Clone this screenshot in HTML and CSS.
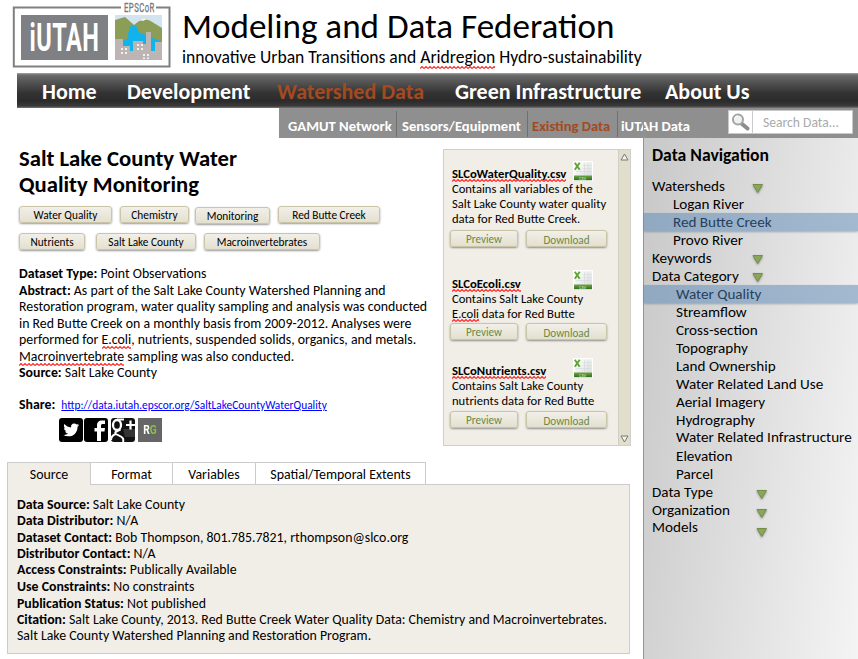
FILE: index.html
```html
<!DOCTYPE html>
<html lang="en">
<head>
<meta charset="utf-8">
<title>Modeling and Data Federation</title>
<link rel="stylesheet" href="styles.css">
</head>
<body>
<svg width="0" height="0" class="defs" aria-hidden="true">
  <defs>
    <linearGradient id="paper" x1="0" y1="0" x2="1" y2="1"><stop offset="0" stop-color="#fff"/><stop offset="1" stop-color="#d9dcdc"/></linearGradient>
    <linearGradient id="band" x1="0" y1="0" x2="0" y2="1"><stop offset="0" stop-color="#6fa548"/><stop offset="1" stop-color="#2f6e1c"/></linearGradient>
    <symbol id="csv" viewBox="0 0 20 20">
      <rect width="20" height="20" fill="#fff"/>
      <rect x="1.5" y="1" width="17.5" height="18" rx="1" fill="url(#paper)"/>
      <path d="M10 4.500h8M10 7.500h8M3 10.500h15M11.500 2v12M15 2v12" stroke="#d3d8d8" stroke-width=".6"/>
      <rect x="1" y="14.500" width="18" height="4.700" fill="url(#band)"/>
      <path d="M1.800 1.700 6.700 8.700M6.700 1.700 1.800 8.700" stroke="#62a335" stroke-width="1.900"/>
      <text x="6" y="18.500" font-size="4.500" font-weight="700" fill="#b9d8a4">CSV</text>
    </symbol>
    <symbol id="tri" viewBox="0 0 12 11"><path d="M1 1.500h9.500L5.750 9.500z" fill="#8aa65a" stroke="#6d8a3c" stroke-width=".9"/></symbol>
  </defs>
</svg>
<div class="page">
  <header class="head">
    <svg class="logo" width="162" height="70" viewBox="0 0 162 70">
      <path d="M109 7.500H1.800V66.500H157.500V7.500H144" fill="none" stroke="#7f8083" stroke-width="2"/>
      <rect x="9" y="15" width="87" height="45" fill="#7f8083"/>
      <text class="logo-name" transform="translate(17.500 51) scale(.62 1)" font-size="38" textLength="112">iUTAH</text>
      <text class="logo-sub" transform="translate(112 11.500) scale(.62 1)" font-size="12.500" textLength="49">EPSCoR</text>
      <rect x="103" y="15" width="47" height="45" fill="#d3e4f0"/>
      <path d="M103 20 113 17 122 25 132 17 150 28V60H103z" fill="#8c9d58"/>
      <path d="M126 21.500 132 17 138 20.500 134 19.500 131 21 129 20.500z" fill="#eef2ea"/>
      <path d="M117 27 121 25.500 126 27C124 30 127 31 127 32 133 35 144 39 150 42V60H110V41C115 40 117 38 116 34 116 31 119 29 117 27z" fill="#12b3ec"/>
      <path d="M103 39h8v7h10V41h10v3h3V32h5v19h4V42h7v18h-47z" fill="#bdb5b3"/>
      <path d="M121 46v5h-3v-5zM143 42v9h-4v-9z" fill="#12b3ec"/>
      <path d="M109 48h2v2h-2zM113 48h2v2h-2zM109 52h2v2h-2zM113 52h2v2h-2zM125 44h2v2h-2zM129 44h2v2h-2zM125 48h2v2h-2zM129 48h2v2h-2zM131 54h2v2h-2zM135 54h2v2h-2zM131 57.500h2v1.500h-2zM135 57.500h2v1.500h-2z" fill="#f3f1f0"/>
    </svg>
    <div class="titles">
      <div class="title">Modeling and Data Federation</div>
      <div class="subtitle">innovative Urban Transitions and <span class="sq">Aridregion</span> Hydro-sustainability</div>
    </div>
  </header>

  <nav class="bar">
    <a class="n1">Home</a><a class="n2">Development</a><a class="n3 on">Watershed Data</a><a class="n4">Green Infrastructure</a><a class="n5">About Us</a>
  </nav>
  <div class="subbar">
    <a class="s1">GAMUT Network</a><a class="s2">Sensors/Equipment</a><a class="s3 on">Existing Data</a><a class="s4">iUTAH Data</a>
    <div class="search">
      <svg width="23" height="22" viewBox="0 0 23 22"><path d="M12.500 12.500 18.500 17.500" stroke="#8d8d8d" stroke-width="4" stroke-linecap="round"/><circle cx="9" cy="8.500" r="5" fill="#eef1f3" stroke="#a3a3a3" stroke-width="2"/><path d="M6 8a3 3 0 0 1 3-3" fill="none" stroke="#fff" stroke-width="1.200"/></svg>
      <span>Search Data...</span>
    </div>
  </div>

  <div class="cols">
    <main class="main">
      <div class="top">
        <section class="info">
          <h1>Salt Lake County Water<br>Quality Monitoring</h1>
          <div class="tags">
            <span class="tag t1">Water Quality</span><span class="tag t2">Chemistry</span><span class="tag t3">Monitoring</span><span class="tag t4">Red Butte Creek</span>
          </div>
          <div class="tags row2">
            <span class="tag t5">Nutrients</span><span class="tag t6">Salt Lake County</span><span class="tag t7">Macroinvertebrates</span>
          </div>
          <div class="desc">
            <b>Dataset Type:</b> Point Observations<br>
            <b>Abstract:</b> As part of the Salt Lake County Watershed Planning and<br>
            Restoration program, water quality sampling and analysis was conducted<br>
            in Red Butte Creek on a monthly basis from 2009-2012. Analyses were<br>
            performed for <span class="sq">E.coli</span>, nutrients, suspended solids, organics, and metals.<br>
            <span class="sq">Macroinvertebrate</span> sampling was also conducted.<br>
            <b>Source:</b> Salt Lake County
          </div>
          <div class="share"><b>Share:</b><a>http://data.iutah.epscor.org/SaltLakeCountyWaterQuality</a></div>
          <div class="social">
            <svg width="24" height="24" viewBox="0 0 24 24"><rect width="24" height="24" rx="3" fill="#000"/><path transform="translate(4.300 4) scale(.66)" fill="#fff" d="M23.950 4.570a10 10 0 0 1-2.820.77 4.960 4.960 0 0 0 2.160-2.720c-.95.55-2 .95-3.130 1.180a4.920 4.920 0 0 0-8.380 4.480C7.690 8.100 4.070 6.130 1.640 3.160a4.820 4.820 0 0 0-.67 2.480c0 1.710.87 3.210 2.190 4.100a4.900 4.900 0 0 1-2.230-.62v.06a4.920 4.920 0 0 0 3.950 4.830 5 5 0 0 1-2.210.08 4.940 4.940 0 0 0 4.600 3.420A9.870 9.870 0 0 1 0 19.540a13.990 13.990 0 0 0 7.550 2.210c9.050 0 14-7.500 14-13.980 0-.21 0-.42-.02-.63a9.940 9.940 0 0 0 2.460-2.550z"/></svg>
            <svg width="24" height="24" viewBox="0 0 24 24"><rect width="24" height="24" rx="3" fill="#000"/><path fill="#fff" d="M13 23v-9.500h-2.500V10H13V7.500C13 4 14.800 2.500 18 2.500h3V6h-2c-1.500 0-2 .6-2 2v2h4l-.5 3.500H17V23z"/></svg>
            <svg class="gp" width="24" height="24" viewBox="0 0 24 24"><rect width="24" height="24" rx="3" fill="#111"/><path d="M12 11h12v8H14z" fill="#333"/><g fill="none" stroke="#fff"><ellipse cx="6" cy="7" rx="4" ry="5" stroke-width="2.300"/><path d="M6 1.500h7M9.500 11.500c-3 2-6 2-5 4 1.500 2 6 2 7.500 5 .5 1.500.5 2 0 3.500M5 16c-3 1-5 3-5 6" stroke-width="2"/><path d="M15 7h9M19.500 2.500v9" stroke-width="2.200"/></g></svg>
            <div class="rg"><span>R<i>G</i></span></div>
          </div>
        </section>

        <section class="files">
          <div class="list">
            <article class="file f1">
              <svg class="ico"><use href="#csv"/></svg>
              <h2><span class="sq">SLCoWaterQuality.csv</span></h2>
              <p>Contains all variables of the<br>Salt Lake County water quality<br>data for Red Butte Creek.</p>
              <div class="btns"><span class="btn pv">Preview</span><span class="btn dl">Download</span></div>
            </article>
            <article class="file f2">
              <svg class="ico"><use href="#csv"/></svg>
              <h2><span class="sq">SLCoEcoli.csv</span></h2>
              <p>Contains Salt Lake County<br><span class="sq">E.coli</span> data for Red Butte</p>
              <div class="btns"><span class="btn pv">Preview</span><span class="btn dl">Download</span></div>
            </article>
            <article class="file f3">
              <svg class="ico"><use href="#csv"/></svg>
              <h2><span class="sq">SLCoNutrients.csv</span></h2>
              <p>Contains Salt Lake County<br>nutrients data for Red Butte</p>
              <div class="btns"><span class="btn pv">Preview</span><span class="btn dl">Download</span></div>
            </article>
          </div>
          <div class="scroll">
            <svg width="9" height="8" viewBox="0 0 9 8"><path d="M4.500 1 8 7H1z" fill="#f4f2ec" stroke="#777" stroke-width="1"/></svg>
            <svg width="9" height="8" viewBox="0 0 9 8"><path d="M4.500 7 8 1H1z" fill="#f4f2ec" stroke="#777" stroke-width="1"/></svg>
          </div>
        </section>
      </div>

      <div class="tabs"><span class="tab a on">Source</span><span class="tab b">Format</span><span class="tab c">Variables</span><span class="tab d">Spatial/Temporal Extents</span></div>
      <section class="panel">
        <div><b>Data Source:</b> Salt Lake County</div>
        <div><b>Data Distributor:</b> N/A</div>
        <div><b>Dataset Contact:</b> Bob Thompson, 801.785.7821, rthompson@slco.org</div>
        <div><b>Distributor Contact:</b> N/A</div>
        <div><b>Access Constraints:</b> Publically Available</div>
        <div class="gap"><b>Use Constraints:</b> No constraints</div>
        <div><b>Publication Status:</b> Not published</div>
        <div><b>Citation:</b> Salt Lake County, 2013. Red Butte Creek Water Quality Data: Chemistry and Macroinvertebrates.<br>Salt Lake County Watershed Planning and Restoration Program.</div>
      </section>
    </main>

    <aside class="side">
      <h3>Data Navigation</h3>
      <ul>
        <li class="g">Watersheds<svg class="tri"><use href="#tri"/></svg></li>
        <li class="r">Logan River</li>
        <li class="r sel">Red Butte Creek</li>
        <li class="r">Provo River</li>
        <li class="g k">Keywords<svg class="tri"><use href="#tri"/></svg></li>
        <li class="g k">Data Category<svg class="tri"><use href="#tri"/></svg></li>
        <li class="c sel">Water Quality</li>
        <li class="c">Streamflow</li>
        <li class="c">Cross-section</li>
        <li class="c">Topography</li>
        <li class="c">Land Ownership</li>
        <li class="c">Water Related Land Use</li>
        <li class="c">Aerial Imagery</li>
        <li class="c">Hydrography</li>
        <li class="c tight">Water Related Infrastructure</li>
        <li class="c">Elevation</li>
        <li class="c">Parcel</li>
        <li class="g low">Data Type<svg class="tri"><use href="#tri"/></svg></li>
        <li class="g low l2">Organization<svg class="tri"><use href="#tri"/></svg></li>
        <li class="g low l3 tight">Models<svg class="tri"><use href="#tri"/></svg></li>
      </ul>
    </aside>
  </div>
</div>
</body>
</html>
```
FILE: styles.css
```css
* { box-sizing: border-box; }
body { margin: 0; background: #fff; color: #000; font-family: Carlito, Calibri, Lato, sans-serif; }
h1, h2, h3, p, ul { margin: 0; padding: 0; }
svg { display: block; flex: none; }
.defs { position: absolute; }
.page { width: 858px; height: 659px; overflow: hidden; }

/* spelling squiggle */
.sq {
  padding-bottom: 1px;
  background: url("data:image/svg+xml,%3Csvg xmlns='http://www.w3.org/2000/svg' width='4' height='3'%3E%3Cpath d='M0 2.500 2 .5 4 2.500' fill='none' stroke='%23f22' stroke-width='1.100'/%3E%3C/svg%3E") repeat-x left bottom;
}

/* header */
.head { display: flex; height: 73px; }
.logo { margin-left: 12px; }
.logo-name { font-family: Roboto, "Liberation Sans", sans-serif; font-weight: 700; fill: #fff; }
.logo-sub { font-family: Roboto, "Liberation Sans", sans-serif; fill: #77787b; stroke: #77787b; stroke-width: .3; }
.titles { margin-left: 8px; padding-top: 6px; white-space: nowrap; }
.title { font-size: 35.100px; line-height: 40px; }
.subtitle { font-size: 17.600px; line-height: 22px; }

.bar {
  display: flex; height: 35px; margin-left: 17px;
  background: linear-gradient(#a5a5a5 0, #6c6c6c 2px, #575757 8px, #333 20px, #2b2b2b 28px, #3a3a3a 33px, #777 35px);
  color: #fff; font-size: 22px; font-weight: 700; line-height: 37px; white-space: nowrap;
}
.on { color: #a34a20; }
.n1 { width: 85px; margin-left: 25px; }
.n2 { width: 150px; }
.n3 { width: 178px; }
.n4 { width: 210px; }

.subbar {
  display: flex; height: 30px; margin-left: 279px; background: #8f8f8f;
  color: #fff; font-size: 14.620px; font-weight: 700; white-space: nowrap;
}
.subbar a { border-left: 1px solid #6f6f6f; margin-top: 3px; height: 26px; line-height: 30px; }
.subbar .s1 { width: 117px; padding-left: 9px; border: 0; }
.s2 { width: 131px; padding-left: 5px; }
.s3 { width: 90px; padding-left: 4px; }
.s4 { width: 111px; padding-left: 3px; }
.search {
  display: flex; width: 125px; height: 24px; margin-top: 2px; background: #fff; border: 1px solid #c9c9c9;
  color: #aaa; font-size: 13.600px; font-weight: 400; line-height: 24px;
}
.search span { border-left: 1px solid #ccc; padding-left: 10px; }

/* columns */
.cols { display: flex; height: 521px; }
.main { width: 643px; }
.top { display: flex; height: 324px; }
.info { width: 443px; padding: 7px 0 0 19px; white-space: nowrap; }
h1 { font-size: 22.700px; line-height: 26px; }
.tags { display: flex; margin-top: 9px; height: 18px; }
.row2 { margin-top: 9px; }
.tag, .btn {
  height: 17px; border: 1px solid #cbc5a8; border-radius: 3px; text-align: center; white-space: nowrap;
  background: linear-gradient(#f1efe8, #e4e0d0); box-shadow: 0 1px 2px rgba(0,0,0,.4);
  font-size: 11.300px; line-height: 17px;
}
.t1 { width: 93px; margin-right: 8px; }
.t2 { width: 69px; margin-right: 6px; }
.t3 { width: 75px; margin: 1px 8px 0 0; }
.t4 { width: 102px; line-height: 16px; }
.t5 { width: 66px; margin-right: 11px; }
.t6 { width: 100px; margin-right: 8px; }
.t7 { width: 116px; }
.desc { margin-top: 15px; font-size: 13.840px; line-height: 16.550px; }
.share { display: flex; align-items: baseline; margin-top: 14px; font-size: 13.840px; line-height: 17px; }
.share a { margin-left: 6px; color: #00f; font-size: 11.380px; text-decoration: underline; }
.social { display: flex; gap: 1px; margin: 4px 0 0 40px; }
.gp { margin-left: 2px; }
.rg {
  width: 24px; height: 24px; margin-left: 2px; background: #666; color: #fff; text-align: center;
  font: 700 12px/24px Roboto, "Liberation Sans", sans-serif;
}
.rg span { display: inline-block; transform: scaleX(.85); }
.rg i { font-style: normal; color: #83c341; }

/* file list */
.files { display: flex; width: 188px; height: 297px; margin-top: 11px; background: #f1eee7; border: 1px solid #cfcfcf; }
.list { width: 174px; padding-left: 7px; white-space: nowrap; }
.scroll {
  display: flex; flex-direction: column; justify-content: space-between; align-items: center;
  width: 12px; padding: 3px 0 2px; background: #e2decc; border-left: 1px solid #cfcfc6;
}
.file { position: relative; padding: 16px 0 0 1px; }
.f1 { height: 110px; }
.f2 { height: 87px; }
.file h2 { font-size: 12.720px; line-height: 15px; }
.file p { font-size: 12.600px; line-height: 15px; }
.ico { position: absolute; left: 122px; top: 11px; width: 20px; height: 20px; }
.f2 .ico { top: 10px; }
.btns { display: flex; margin: 4px 0 0 -2px; }
.f2 .btns { margin-top: 2px; }
.f3 .btns { margin-top: 3px; }
.btn { color: #6a8b45; font-size: 11.120px; }
.pv { width: 68px; margin-right: 8px; }
.dl { width: 81px; line-height: 18px; }

/* details */
.tabs { display: flex; height: 23px; margin-left: 7px; font-size: 13.900px; line-height: 24px; }
.tab { border: 1px solid #ccc; border-width: 1px 0 0 1px; text-align: center; }
.tab.on { background: #f1eee7; color: inherit; }
.a { width: 83px; }
.b { width: 82px; }
.tab.c { width: 83px; }
.d { width: 171px; border-right-width: 1px; }
.panel {
  width: 623px; height: 170px; margin: -1px 0 0 7px; padding: 12px 0 0 9px; white-space: nowrap;
  background: #f1eee7; border: 1px solid #ccc; font-size: 13.840px; line-height: 16.300px;
}
.gap { margin-top: 1px; }

/* sidebar */
.side {
  position: relative; width: 215px; border-left: 1px solid #8ba45c; white-space: nowrap;
  background: linear-gradient(97deg, #c8c8c8, #f4f4f4);
}
.side::before { content: ""; position: absolute; left: -1px; top: -19px; width: 1px; height: 19px; background: #8ba45c; }
.side h3 { font-size: 17.650px; line-height: 22px; padding: 6px 0 0 8px; }
.side ul { list-style: none; margin-top: 11px; font-size: 15.150px; line-height: 18px; }
.side li { height: 18px; }
.side .tight { line-height: 16px; }
.g { position: relative; padding-left: 8px; }
.r { padding-left: 29px; }
.side .c { padding-left: 32px; }
.sel { background: linear-gradient(90deg, #90a9c1, #a3b9d0); color: #25405c; box-shadow: 0 1px 2px rgba(80,100,120,.45); }
.tri { position: absolute; left: 108px; top: 6px; width: 12px; height: 11px; filter: drop-shadow(0 1px 1px rgba(0,0,0,.35)); }
.k .tri { top: 5px; }
.low .tri { left: 112px; }
.l2 .tri { top: 7px; }
.l3 .tri { top: 8px; }
```
